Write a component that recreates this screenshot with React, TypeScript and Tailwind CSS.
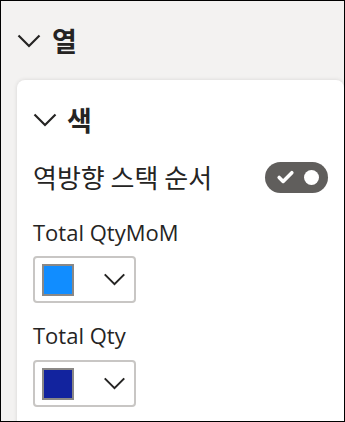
import { Check } from "lucide-react"

function Chevron({ className }: { className?: string }) {
  return (
    <svg viewBox="0 0 24 14" className={className} fill="none" stroke="currentColor" strokeWidth="2.2">
      <path d="M1.5 1.5 L12 12 L22.5 1.5" />
    </svg>
  )
}

function ColorPicker({ color }: { color: string }) {
  return (
    <div className="flex h-[47px] w-[103px] items-center justify-between rounded-[4px] border-2 border-[#c8c6c4] pl-[7px] pr-[8px]">
      <div className="h-[32px] w-[32px] border-2 border-[#8a8886]" style={{ background: color }} />
      <Chevron className="h-[13px] w-[23px] text-[#252423]" />
    </div>
  )
}

const kr = { fontFamily: '"Noto Sans CJK KR", sans-serif' }

export default function App() {
  return (
    <div
      className="h-[422px] w-[345px] overflow-hidden border border-black bg-[#f3f2f1] text-[#252423]"
      style={{ fontFamily: '"Open Sans", "Noto Sans CJK KR", sans-serif' }}
    >
      <div className="flex h-[28px] items-center gap-[11px] pl-[16px] mt-[26px]">
        <Chevron className="h-[14px] w-[24px]" />
        <span className="text-[27px] font-bold leading-[28px]" style={kr}>
          열
        </span>
      </div>

      <div className="ml-[16px] mt-[25px] h-[400px] rounded-t-[8px] bg-white pl-[16px] pr-[16px] pt-[26px] shadow-[0_0_4px_rgba(0,0,0,0.12)]">
        <div className="flex h-[28px] items-center gap-[10px]">
          <Chevron className="h-[14px] w-[24px]" />
          <span className="text-[27px] font-bold leading-[28px]" style={kr}>
            색
          </span>
        </div>

        <div className="mt-[27px] flex h-[32px] items-center justify-between">
          <span className="text-[26px] leading-[32px]" style={kr}>
            역방향 스택 순서
          </span>
          <div className="flex h-[31px] w-[63px] items-center justify-between rounded-full bg-[#605e5c] pl-[11px] pr-[9px]">
            <Check className="h-[19px] w-[19px] text-white" strokeWidth={4.5} />
            <div className="h-[15px] w-[15px] rounded-full bg-white" />
          </div>
        </div>

        <div className="mt-[24px] text-[22px] leading-[30px]">Total QtyMoM</div>
        <div className="mt-[9px]">
          <ColorPicker color="#118dff" />
        </div>

        <div className="mt-[17px] text-[22px] leading-[30px]">Total Qty</div>
        <div className="mt-[10px]">
          <ColorPicker color="#12239e" />
        </div>
      </div>
    </div>
  )
}
